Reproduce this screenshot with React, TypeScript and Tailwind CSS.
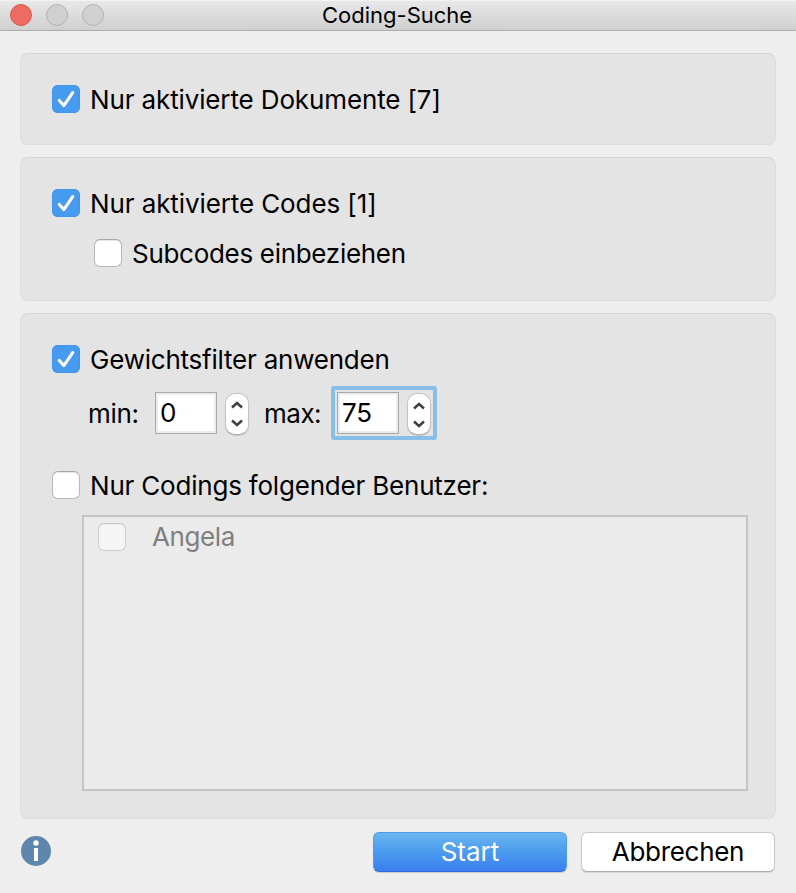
import { useState } from 'react';
import clsx from 'clsx';

interface CheckProps {
  label: string;
  initial?: boolean;
  disabled?: boolean;
  className?: string;
  textClass: string;
}

function Check({ label, initial = false, disabled = false, className, textClass }: CheckProps) {
  const [checked, setChecked] = useState(initial);

  return (
    <label className={clsx('flex h-7 items-center', className)}>
      <input
        type="checkbox"
        className="sr-only"
        checked={checked}
        disabled={disabled}
        onChange={() => setChecked(prev => !prev)}
      />
      <span
        className={clsx(
          'h-7 w-7 shrink-0 rounded-[6px]',
          checked && 'bg-[#479bee] shadow-[inset_0_0_0_1px_#4295ea]',
          !checked && !disabled && 'border border-[#b9b9b9] border-t-[#a6a6a6] bg-white shadow-[inset_0_1px_1px_#e6e6e6]',
          !checked && disabled && 'border border-[#cdcdcd] border-t-[#c3c3c3] bg-[#f5f5f5] shadow-[inset_0_1px_1px_#ebebeb]',
        )}
      >
        {checked && (
          <svg viewBox="0 0 28 28" className="h-7 w-7" fill="none" strokeLinecap="round" strokeLinejoin="round">
            <path d="M7.5 16.3 L12 21.8 L20.7 8.6" stroke="#3b86d2" strokeWidth="2.6" opacity="0.5" />
            <path d="M7.3 15.5 L11.9 20.6 L20.7 7.6" stroke="#fff" strokeWidth="3.1" />
          </svg>
        )}
      </span>
      <span className={clsx('whitespace-nowrap leading-7', textClass)}>{label}</span>
    </label>
  );
}

function NumberField({ initial }: { initial: number }) {
  const [value, setValue] = useState(initial);

  return (
    <div className="flex">
      <input
        className="h-[42px] w-[62px] border border-[#a8a8a8] bg-white pb-px pl-1 text-[26px] tracking-[-0.3px] text-black shadow-[inset_0_0_0_2px_#ececec] outline-none"
        value={value}
        onChange={e => setValue(Number(e.target.value) || 0)}
      />
      <div className="mt-px ml-2 flex h-[42px] w-6 flex-col rounded-[10px] border border-[#c4c4c4] border-b-[#aaaaaa] bg-white shadow-[0_1px_1px_rgba(0,0,0,0.12)]">
        <button className="flex h-5 items-center justify-center" onClick={() => setValue(v => v + 1)}>
          <svg viewBox="0 0 12 8" className="mt-[3px] h-2 w-3" fill="none" stroke="#404040" strokeWidth="2.5">
            <path d="M1 6.5 L6 2 L11 6.5" />
          </svg>
        </button>
        <button className="flex h-5 items-center justify-center" onClick={() => setValue(v => v - 1)}>
          <svg viewBox="0 0 12 8" className="mb-px h-2 w-3" fill="none" stroke="#404040" strokeWidth="2.5">
            <path d="M1 1.5 L6 6 L11 1.5" />
          </svg>
        </button>
      </div>
    </div>
  );
}

const panel = 'rounded-[8px] border border-[#dcdcdc] border-t-[#d5d5d5] bg-[#e4e4e4]';

export default function App() {
  return (
    <div className="flex h-[893px] w-[796px] flex-col overflow-hidden bg-[#eeeeee] font-['Inter',sans-serif] text-[26px] text-black">
      <header className="flex h-[31px] shrink-0 items-center border-b border-[#adadad] bg-linear-to-b from-[#e9e9e9] to-[#d0d0d0] pl-[10px] shadow-[inset_0_1px_0_#f3f3f3]">
        <div className="flex w-[94px] gap-[14px]">
          <span className="h-[22px] w-[22px] rounded-full border border-[#d9584e] bg-[#ed6b60]" />
          <span className="h-[22px] w-[22px] rounded-full border border-[#b2b2b2] bg-[#d0d0d0]" />
          <span className="h-[22px] w-[22px] rounded-full border border-[#b2b2b2] bg-[#d0d0d0]" />
        </div>
        <h1 className="ml-[218px] text-[22px] leading-[30px]">Coding-Suche</h1>
      </header>

      <main className="mx-5 mt-[22px] flex flex-col gap-3">
        <section className={clsx(panel, 'h-[92px] pt-[31px] pl-[31px]')}>
          <Check initial label="Nur aktivierte Dokumente [7]" textClass="pt-[2px] ml-[10px] tracking-[-0.13px]" />
        </section>

        <section className={clsx(panel, 'h-36 pt-[31px] pl-[31px]')}>
          <Check initial label="Nur aktivierte Codes [1]" textClass="pt-[2px] ml-[10px] tracking-[-0.1px]" />
          <Check label="Subcodes einbeziehen" className="mt-[22px] ml-[42px]" textClass="pt-[2px] ml-[10px] tracking-[-0.3px]" />
        </section>

        <section className={clsx(panel, 'h-[506px] pt-[31px] pl-[31px]')}>
          <Check initial label="Gewichtsfilter anwenden" textClass="pt-[2px] ml-[10px] tracking-[-0.22px]" />
          <div className="mt-[13px] ml-[36px] flex h-[54px] items-center">
            <span className="w-[67px] pt-px tracking-[-0.3px]">min:</span>
            <NumberField initial={0} />
            <span className="ml-[15px] w-[67px] pt-px tracking-[-0.5px]">max:</span>
            <div className="h-[54px] w-[106px] rounded-[3px] border-4 border-[#87bfe9] pt-[2px] pl-[2px]">
              <NumberField initial={75} />
            </div>
          </div>
          <Check label="Nur Codings folgender Benutzer:" className="mt-[31px]" textClass="pt-[2px] ml-[10px] tracking-[-0.2px]" />
          <div className="mt-4 ml-[30px] h-[276px] w-[666px] border-2 border-[#c5c5c5] bg-[#ebebeb] pt-[6px] pl-[14px]">
            <Check disabled label="Angela" textClass="ml-[26px] text-[#7f7f7f] tracking-[-0.4px]" />
          </div>
        </section>
      </main>

      <footer className="mt-[13px] flex h-10 items-center pl-[21px]">
        <svg viewBox="0 0 30 30" className="mt-[-2px] h-[30px] w-[30px]">
          <circle cx="15" cy="15" r="15" fill="#5f87ae" />
          <circle cx="15" cy="7" r="2.7" fill="#fff" />
          <rect x="13" y="12" width="4" height="13" fill="#fff" />
        </svg>
        <button className="ml-[322px] h-10 w-[194px] rounded-[6px] border border-[#4a9ee6] border-b-[#2f68e0] bg-linear-to-b from-[#6cb5f0] via-[#4a9bee] to-[#3b7ff0] leading-9 tracking-[0px] text-white shadow-[0_1px_1px_rgba(0,0,0,0.15)]">
          Start
        </button>
        <button className="ml-[14px] h-10 w-[194px] rounded-[6px] border border-[#c8c8c8] border-b-[#aaaaaa] bg-white leading-9 tracking-[-0.3px] shadow-[0_1px_1px_rgba(0,0,0,0.1)]">
          Abbrechen
        </button>
      </footer>
    </div>
  );
}
